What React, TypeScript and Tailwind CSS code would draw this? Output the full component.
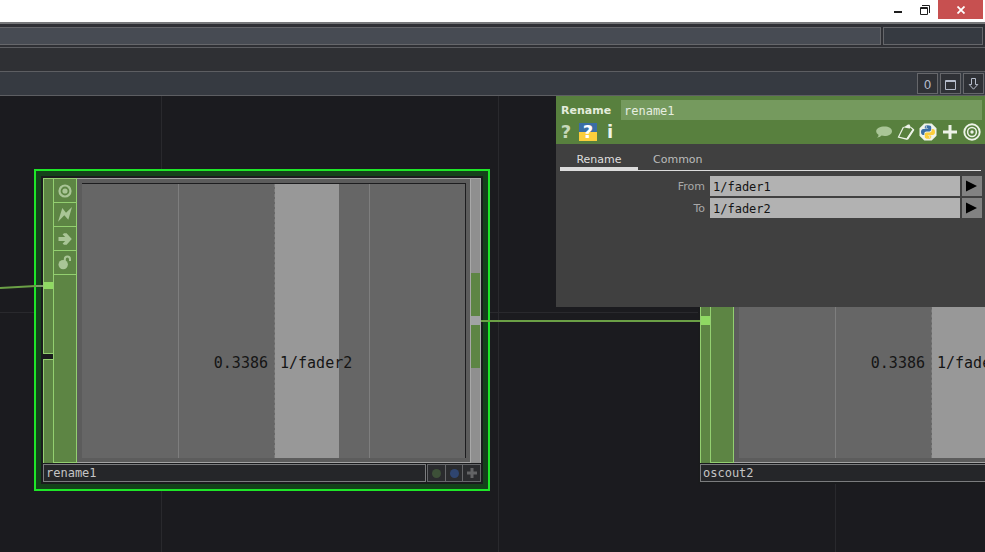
import React, { useState } from 'react';
import { clsx } from 'clsx';

interface OperatorNodeProps {
  name: string;
  channel: string;
  value: number;
  inputClass: string;
  splitInput?: boolean;
  selected?: boolean;
}

const flagButton =
  'flex h-6 w-full items-center justify-center border-b border-[#93cf70] text-[#a9c596] focus:outline-none';
const footerButton =
  'flex flex-1 items-center justify-center border-r border-[#66676a] bg-[#2a2b2e] focus:outline-none';
const headerButton = 'flex h-[18px] w-[18px] items-center justify-center focus:outline-none';
const toolButton =
  'flex h-[21px] w-[21px] items-center justify-center border border-[#66676b] bg-[#2f3136] text-[#b5bccb] focus:outline-none';

function TargetIcon() {
  return (
    <svg width="14" height="14" viewBox="0 0 14 14" fill="none">
      <circle cx="7" cy="7" r="5.5" stroke="currentColor" strokeWidth="2.2" />
      <circle cx="7" cy="7" r="2.6" fill="currentColor" />
    </svg>
  );
}

function BoltIcon() {
  return (
    <svg width="14" height="15" viewBox="0 0 14 15" fill="currentColor">
      <path d="M0 14.700 4.300 1 8 5.800 14 0 10.300 12.800 6.300 8.200z" />
    </svg>
  );
}

function ArrowIcon() {
  return (
    <svg width="14" height="12" viewBox="0 0 14 12" fill="currentColor">
      <path d="M.5 4H7.2L4.6 1.4 6 0.2h2.6L13.8 6 8.6 11.8H6L4.6 10.6 7.2 8H.5z" />
    </svg>
  );
}

function LockIcon() {
  return (
    <svg width="14" height="15" viewBox="0 0 14 15" fill="none">
      <circle cx="5.2" cy="9.6" r="4.7" fill="currentColor" />
      <path d="M6.8 7V4.2a2.6 2.6 0 0 1 5.2 0V6" stroke="currentColor" strokeWidth="2" />
    </svg>
  );
}

function PythonIcon() {
  return (
    <svg width="18" height="18" viewBox="0 0 18 18">
      <path d="M5.3.5h7.4l4.8 4.8v7.4l-4.8 4.8H5.3L.5 12.7V5.3z" fill="#eef3ea" />
      <path
        d="M8.8 2.2c-2.7 0-3 1-3 1.8v1.5h3.3v.6H4.3C2.7 6.1 2 7.5 2 9.1s.7 2.9 2.1 2.9h1.2v-1.6c0-1.1 1-2 2.1-2h3c1 0 1.8-.8 1.8-1.8V4c0-1.1-1-1.8-3.4-1.8z"
        fill="#3b6ea5"
      />
      <path
        d="M9.2 15.8c2.7 0 3-1 3-1.8v-1.5H8.9v-.6h4.8c1.6 0 2.3-1.4 2.3-3S15.3 6 13.9 6h-1.2v1.6c0 1.100-1 2-2.1 2h-3c-1 0-1.8.8-1.8 1.800V14c0 1.100 1 1.800 3.400 1.800z"
        fill="#fbce3c"
      />
      <circle cx="7.3" cy="4" r=".7" fill="#eef3ea" />
      <circle cx="10.7" cy="14" r=".7" fill="#eef3ea" />
    </svg>
  );
}

function OperatorNode({ name, channel, value, inputClass, splitInput, selected }: OperatorNodeProps) {
  return (
    <div
      className={clsx(
        'border-2',
        selected ? 'border-[#1ee628] bg-[#14421a] p-[5px]' : 'border-transparent p-[5px]'
      )}
    >
      <div className="flex w-[442px] flex-col gap-px bg-[#1a1b1d] p-[2px]">
        <div className="flex h-[285px]">
          {/* Input connectors */}
          <div className="flex w-[10px] flex-col gap-[5px]">
            <div
              className={clsx(
                'border-t border-l border-[#93cf70] bg-[#5d8544]',
                inputClass,
                splitInput ? 'h-44 border-b' : 'flex-1'
              )}
            >
              <div className={clsx('bg-[#8fd963]', splitInput ? 'h-[7px]' : 'h-[9px]')} />
            </div>
            {splitInput && <div className="flex-1 border-t border-l border-[#93cf70] bg-[#5d8544]" />}
          </div>

          {/* Flags */}
          <div className="w-6 border border-[#93cf70] bg-[#5d8544]">
            <button type="button" aria-label="Viewer active" className={flagButton}>
              <TargetIcon />
            </button>
            <button type="button" aria-label="Bypass" className={flagButton}>
              <BoltIcon />
            </button>
            <button type="button" aria-label="Export" className={flagButton}>
              <ArrowIcon />
            </button>
            <button type="button" aria-label="Lock" className={flagButton}>
              <LockIcon />
            </button>
          </div>

          {/* Viewer */}
          <div className="flex-1 border-y border-[#a3a3a3] bg-[#5c5c5c] pt-1 pr-1 pb-1 pl-[5px]">
            <div className="relative flex h-full border-t border-r border-[#1d1d1f] bg-[#666666] pl-px">
              <div className="flex-1" />
              <div className="flex-1 border-l border-[#7e7e7e]" />
              <div className="flex-1 border-l border-dashed border-[#7a7a7a]">
                <div className="h-full w-[68%] bg-[#989898]" />
              </div>
              <div className="flex-1 border-l border-[#7e7e7e]" />
              <div className="absolute inset-x-0 bottom-[85px] grid grid-cols-2 gap-3 pl-px font-['DejaVu_Sans_Mono',monospace] text-[15px] leading-5 text-[#151515]">
                <span className="text-right">{value}</span>
                <span>{channel}</span>
              </div>
            </div>
          </div>

          {/* Output connector */}
          <div className="flex w-[11px] flex-col justify-center border-x border-t border-[#a8a8a8] bg-[#8f8f8f] pb-[2px]">
            <div className="h-[43px] bg-[#5d8544]" />
            <div className="h-[9px] bg-[#a1a3a5]" />
            <div className="h-[43px] bg-[#5d8544]" />
          </div>
        </div>

        <div className="flex h-[18px] gap-px">
          <input
            aria-label="Operator name"
            defaultValue={name}
            className="min-w-0 flex-1 border border-[#7b7c7e] bg-[#252629] px-[2px] font-['DejaVu_Sans_Mono',monospace] text-xs text-[#c4c4c4] focus:outline-none"
          />
          <div className="flex w-[54px] border-y border-l border-[#66676a]">
            <button type="button" aria-label="Display" className={footerButton}>
              <span className="h-[9px] w-[9px] rounded-full bg-[#3d5038]" />
            </button>
            <button type="button" aria-label="Render" className={footerButton}>
              <span className="h-[9px] w-[9px] rounded-full bg-[#2f4570]" />
            </button>
            <button type="button" aria-label="Activate viewer" className={footerButton}>
              <svg width="10" height="10" viewBox="0 0 10 10" stroke="#626365" strokeWidth="3">
                <path d="M5 0v10M0 5h10" />
              </svg>
            </button>
          </div>
        </div>
      </div>
    </div>
  );
}

function ParameterRow({ id, label, initial }: { id: string; label: string; initial: string }) {
  const [value, setValue] = useState(initial);

  return (
    <div className="flex h-5 items-center">
      <label htmlFor={id} className="w-[149px] pt-[2px] pr-[5px] text-right text-[11px] text-[#a8a8a8]">
        {label}
      </label>
      <input
        id={id}
        value={value}
        onChange={(e) => setValue(e.target.value)}
        className="mr-[2px] h-5 min-w-0 flex-1 bg-[#b2b2b2] px-[3px] pt-[2px] font-['DejaVu_Sans_Mono',monospace] text-xs text-[#141414] focus:outline-none"
      />
      <button
        type="button"
        aria-label={`${label} options`}
        className="flex h-5 w-5 items-center justify-center bg-[#828282] focus:outline-none"
      >
        <svg width="12" height="12" viewBox="0 0 12 12" fill="#000">
          <path d="M0 .5 11 6 0 11.5z" />
        </svg>
      </button>
    </div>
  );
}

function ParameterPanel() {
  const [tab, setTab] = useState('Rename');

  return (
    <section className="flex h-[211px] flex-col bg-[#404040] font-['DejaVu_Sans',sans-serif]">
      <header className="bg-[#58803e] pt-1 pb-[2px]">
        <div className="flex h-5 items-center pr-[3px] pl-[5px]">
          <label htmlFor="op-name" className="w-[60px] pt-[2px] text-[11px] font-bold text-[#e3ecdc]">
            Rename
          </label>
          <input
            id="op-name"
            defaultValue="rename1"
            className="h-5 min-w-0 flex-1 bg-[#759a5e] px-[3px] pt-[2px] font-['DejaVu_Sans_Mono',monospace] text-xs text-[#e6eee0] focus:outline-none"
          />
        </div>
        <div className="flex h-[22px] items-center justify-between pt-[2px] pr-1 pl-[1px] text-[#edf3e8]">
          <div className="flex gap-1">
            <button
              type="button"
              aria-label="Help"
              className={clsx(headerButton, 'text-lg leading-none font-bold text-[#c6d9ba]')}
            >
              ?
            </button>
            <button
              type="button"
              aria-label="Python help"
              className={clsx(
                headerButton,
                'bg-linear-to-b from-[#3a6ea5] from-50% to-[#fbce3c] to-50% text-lg leading-none font-bold text-white'
              )}
            >
              ?
            </button>
            <button type="button" aria-label="Info" className={clsx(headerButton, 'text-lg leading-none font-bold')}>
              i
            </button>
          </div>
          <div className="flex gap-1">
            <button type="button" aria-label="Comment" className={headerButton}>
              <svg width="18" height="14" viewBox="0 0 18 14" fill="#a9c596">
                <path d="M9.5 1.5c4.300 0 7.500 2 7.500 4.700S13.800 11 9.500 11c-1 0-2-.1-2.900-.4C5.500 11.800 4 12.500 2 12.700c1-.8 1.600-1.800 1.500-3C2.100 8.800 1.200 7.600 1.200 6.200c0-2.700 3.900-4.700 8.300-4.700z" />
              </svg>
            </button>
            <button type="button" aria-label="Copy parameters" className={headerButton}>
              <svg width="18" height="18" viewBox="0 0 18 18" fill="none" stroke="#edf3e8">
                <path d="M6.500 4 1.500 14l8.500 2.200L16.500 6.500 14 4.500" strokeWidth="1.200" />
                <path d="m10.300 16 6.200-9.500" strokeWidth="2" />
                <path d="m6.500 4 1.500-.5L11 1.500h1.500L14 4.500l-1.500 1-5.500-1z" fill="#edf3e8" stroke="none" />
              </svg>
            </button>
            <button type="button" aria-label="Python language" className={headerButton}>
              <PythonIcon />
            </button>
            <button type="button" aria-label="Add parameter" className={headerButton}>
              <svg width="14" height="14" viewBox="0 0 14 14" stroke="currentColor" strokeWidth="3">
                <path d="M7 0v14M0 7h14" />
              </svg>
            </button>
            <button type="button" aria-label="Show non-default parameters" className={headerButton}>
              <svg width="18" height="18" viewBox="0 0 18 18" fill="none" stroke="currentColor">
                <circle cx="9" cy="9" r="7.7" strokeWidth="1.9" />
                <circle cx="9" cy="9" r="4.4" strokeWidth="1.5" />
                <circle cx="9" cy="9" r="1.7" fill="currentColor" stroke="none" />
              </svg>
            </button>
          </div>
        </div>
      </header>

      {/* Tabs */}
      <div role="tablist" className="mt-1 mr-1 ml-1 flex h-[23px] border-b border-[#dcdcdc]">
        {['Rename', 'Common'].map((label) => (
          <button
            key={label}
            type="button"
            role="tab"
            aria-selected={tab === label}
            onClick={() => setTab(label)}
            className={clsx(
              'h-[22px] border-b-[3px] px-[15px] pt-[2px] text-[11px] leading-5 focus:outline-none',
              tab === label ? 'w-[78px] border-[#dcdcdc] text-[#dedede]' : 'border-transparent text-[#bcbcbc]'
            )}
          >
            {label}
          </button>
        ))}
      </div>

      <div className="mt-[5px] mr-[3px] ml-[5px] flex flex-col gap-[2px]">
        <ParameterRow id="par-from" label="From" initial="1/fader1" />
        <ParameterRow id="par-to" label="To" initial="1/fader2" />
      </div>
    </section>
  );
}

export default function App() {
  return (
    <div className="flex h-screen flex-col overflow-hidden bg-[#1b1b1f] font-['DejaVu_Sans',sans-serif]">
      {/* Window title bar */}
      <div className="flex h-[22px] shrink-0 items-start justify-end bg-white pr-[2px] text-[#1e1e1e]">
        <button type="button" aria-label="Minimize" className="flex h-[19px] w-[26px] items-center justify-center">
          <svg width="8" height="10" viewBox="0 0 8 10" fill="currentColor">
            <path d="M0 6h8v2H0z" />
          </svg>
        </button>
        <button type="button" aria-label="Restore" className="flex h-[19px] w-[27px] items-center justify-center">
          <svg width="10" height="10" viewBox="0 0 10 10" fill="none" stroke="currentColor">
            <path d="M.5 2.500h7v7h-7zM0 3.500h8M2 .5h7.500V8" />
          </svg>
        </button>
        <button
          type="button"
          aria-label="Close"
          className="flex h-[19px] w-[45px] items-center justify-center bg-[#c75050] text-white"
        >
          <svg width="8" height="8" viewBox="0 0 8 8" stroke="currentColor" strokeWidth="1.8">
            <path d="m.5.5 7 7M7.500.5l-7 7" />
          </svg>
        </button>
      </div>

      {/* Toolbars */}
      <div className="flex h-[26px] shrink-0 gap-[2px] border-t-2 border-b border-t-[#77787a] border-b-[#5d5e62] bg-[#2f3035] pt-[3px] pr-[2px] pb-[2px]">
        <div className="flex-1 border-y border-r border-[#66676b] bg-[#474b53]" />
        <div className="w-[100px] border border-[#66676b] bg-[#363a41]" />
      </div>
      <div className="h-[23px] shrink-0 bg-[#2f3034]" />
      <div className="flex h-[25px] shrink-0 items-center justify-end gap-[2px] border-y border-[#5d5e62] bg-[#363a41] pr-px">
        <button type="button" aria-label="Zero" className={clsx(toolButton, 'pt-[2px] text-xs')}>
          0
        </button>
        <button type="button" aria-label="Floating window" className={clsx(toolButton, 'pt-[2px]')}>
          <svg width="11" height="10" viewBox="0 0 11 10" fill="none" stroke="currentColor">
            <path d="M.5.5h10v9H.5zM0 1.500h11" />
          </svg>
        </button>
        <button type="button" aria-label="Pane menu" className={toolButton}>
          <svg width="11" height="12" viewBox="0 0 11 12" fill="none" stroke="currentColor">
            <path d="M3.500.5h4v6h2.300L5.500 11.200 1.200 6.500h2.300z" />
          </svg>
        </button>
      </div>

      {/* Network editor */}
      <main className="relative min-h-0 flex-1 overflow-hidden">
        <svg className="absolute inset-0 h-full w-full" stroke="#29292d">
          <path d="M161.500 0v2000M498.500 0v2000M835.500 0v2000M0 216.500h4000" />
        </svg>
        <div className="absolute top-[73px] left-[34px]">
          <OperatorNode name="rename1" channel="1/fader2" value={0.3386} inputClass="pt-[103px]" splitInput selected />
        </div>
        <div className="absolute top-[73px] left-[691px]">
          <OperatorNode name="oscout2" channel="1/fader2" value={0.3386} inputClass="pt-[137px]" />
        </div>
        <svg className="pointer-events-none absolute inset-0 h-full w-full" strokeWidth="2">
          <path d="M0 192 36 190" stroke="#6ba046" />
          <path d="M36 190h7" stroke="#7d9a6c" />
          <path d="M481 225h219" stroke="#6ba046" />
        </svg>
        <div className="absolute top-0 right-0 w-[429px]">
          <ParameterPanel />
        </div>
      </main>
    </div>
  );
}
